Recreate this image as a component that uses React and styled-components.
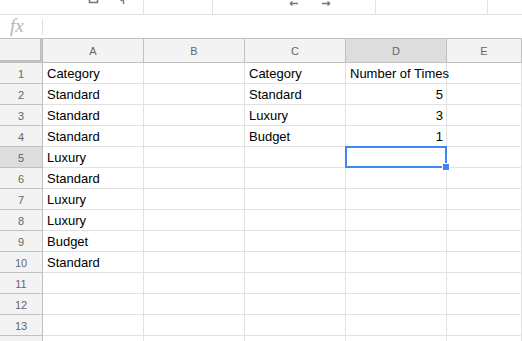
import React from "react";
import styled, { createGlobalStyle } from "styled-components";

const columns = ["A", "B", "C", "D", "E"];

const cells = {
  1: { A: "Category", C: "Category", D: "Number of Times" },
  2: { A: "Standard", C: "Standard", D: 5 },
  3: { A: "Standard", C: "Luxury", D: 3 },
  4: { A: "Standard", C: "Budget", D: 1 },
  5: { A: "Luxury" },
  6: { A: "Standard" },
  7: { A: "Luxury" },
  8: { A: "Luxury" },
  9: { A: "Budget" },
  10: { A: "Standard" },
};

const selected = { row: 5, col: "D" };
const visibleRows = 13;

const GlobalStyle = createGlobalStyle`
  html, body {
    margin: 0;
    padding: 0;
    background: #fff;
    overflow: hidden;
  }
  body {
    font-family: "Liberation Sans", Arial, sans-serif;
  }
`;

const App = () => {
  // one extra row peeks in at the bottom edge, its number is off-screen
  const rows = Array.from({ length: visibleRows + 1 }, (_, i) => i + 1);

  return (
    <Page>
      <GlobalStyle />
      <Toolbar>
        <ToolSegment width={143}>
          <ToolIcons>
            <svg width="12" height="5" viewBox="0 0 12 5" style={{ marginLeft: 88 }}>
              <path d="M1.5 -3 V2.5 H9.5 V-3" fill="none" stroke="#777" strokeWidth="1.6" />
            </svg>
            <svg width="6" height="5" viewBox="0 0 6 5" style={{ marginLeft: 20 }}>
              <path d="M0.5 0.5 H2.5 M3.5 0 V4" fill="none" stroke="#777" strokeWidth="1.4" />
            </svg>
          </ToolIcons>
        </ToolSegment>
        <ToolSegment width={68} />
        <ToolSegment width={162}>
          <ToolIcons>
            <svg width="10" height="7" viewBox="0 0 10 7" style={{ marginLeft: 76 }}>
              <path d="M1 3.5 H9 M1 3.5 L3.5 1.5 M1 3.5 L3.5 5.5" fill="none" stroke="#777" strokeWidth="1.3" />
            </svg>
            <svg width="10" height="7" viewBox="0 0 10 7" style={{ marginLeft: 22 }}>
              <path d="M1 3.5 H9 M9 3.5 L6.5 1.5 M9 3.5 L6.5 5.5" fill="none" stroke="#777" strokeWidth="1.3" />
            </svg>
          </ToolIcons>
        </ToolSegment>
        <ToolSegment width={111} />
        <ToolSegment grow />
      </Toolbar>

      <FormulaBar>
        <FxLabel>fx</FxLabel>
        <FxDivider />
      </FormulaBar>

      <Grid>
        <Corner />
        {columns.map((c) => (
          <ColHeader key={c} active={c === selected.col}>
            {c}
          </ColHeader>
        ))}
        {rows.map((r) => (
          <React.Fragment key={r}>
            <RowHeader active={r === selected.row}>{r <= visibleRows ? r : ""}</RowHeader>
            {columns.map((c) => {
              const value = cells[r] && cells[r][c];
              const numeric = typeof value === "number";
              const isSel = r === selected.row && c === selected.col;
              return (
                <Cell key={c} numeric={numeric}>
                  {value !== undefined && <CellText>{value}</CellText>}
                  {isSel && (
                    <Selection>
                      <Handle />
                    </Selection>
                  )}
                </Cell>
              );
            })}
          </React.Fragment>
        ))}
      </Grid>
    </Page>
  );
};

export default App;

const Page = styled.div`
  width: 100%;
  height: 341px;
  overflow: hidden;
  background: #fff;
`;

const Toolbar = styled.div`
  display: flex;
  height: 15px;
  box-sizing: border-box;
  border-bottom: 1px solid #e2e2e2;
`;

const ToolSegment = styled.div`
  ${({ grow, width }) => (grow ? "flex: 1;" : `width: ${width + 1}px; flex: none;`)}
  box-sizing: border-box;
  border-right: ${({ grow }) => (grow ? "none" : "1px solid #e2e2e2")};
  overflow: hidden;
`;

const ToolIcons = styled.div`
  display: flex;
  align-items: flex-start;
  height: 14px;
  svg {
    display: block;
    flex: none;
  }
`;

const FormulaBar = styled.div`
  display: flex;
  align-items: center;
  height: 24px;
  box-sizing: border-box;
  border-bottom: 1px solid #c0c0c0;
`;

const FxLabel = styled.div`
  width: 42px;
  box-sizing: border-box;
  padding-left: 10px;
  font-family: "Liberation Serif", "Times New Roman", serif;
  font-style: italic;
  font-size: 19px;
  line-height: 20px;
  color: #b5b5b5;
  margin-top: -2px;
`;

const FxDivider = styled.div`
  width: 1px;
  height: 16px;
  background: #e0e0e0;
`;

const Grid = styled.div`
  display: grid;
  grid-template-columns: 43px repeat(4, 101px) 1fr;
  grid-template-rows: 24px;
  grid-auto-rows: 21px;
`;

const HeaderBase = styled.div`
  box-sizing: border-box;
  display: flex;
  align-items: center;
  justify-content: center;
  padding-top: 1px;
  font-family: "Liberation Sans", Arial, sans-serif;
  font-size: 11px;
  color: #666;
  background: ${({ active }) => (active ? "#dddddd" : "#f3f3f3")};
`;

const Corner = styled.div`
  box-sizing: border-box;
  background: #f3f3f3;
  border-right: 3px solid #c0c0c0;
  border-bottom: 3px solid #c0c0c0;
`;

const ColHeader = styled(HeaderBase)`
  border-right: 1px solid #c0c0c0;
  border-bottom: 1px solid #c0c0c0;
`;

const RowHeader = styled(HeaderBase)`
  border-right: 1px solid #c0c0c0;
  border-bottom: 1px solid #c0c0c0;
`;

const Cell = styled.div`
  position: relative;
  box-sizing: border-box;
  border-right: 1px solid #e2e2e2;
  border-bottom: 1px solid #e2e2e2;
  padding: 1px 3px 0 4px;
  display: flex;
  justify-content: ${({ numeric }) => (numeric ? "flex-end" : "flex-start")};
  font-size: 13px;
  line-height: 20px;
  color: #000;
  white-space: nowrap;
  min-width: 0;
`;

const CellText = styled.span`
  position: relative;
  z-index: 1;
`;

const Selection = styled.div`
  position: absolute;
  left: -1px;
  top: -1px;
  width: 102px;
  height: 22px;
  box-sizing: border-box;
  border: 2px solid #4285f4;
  z-index: 2;
`;

const Handle = styled.div`
  position: absolute;
  right: -5px;
  bottom: -5px;
  width: 6px;
  height: 6px;
  background: #4285f4;
  border: 1px solid #fff;
`;
